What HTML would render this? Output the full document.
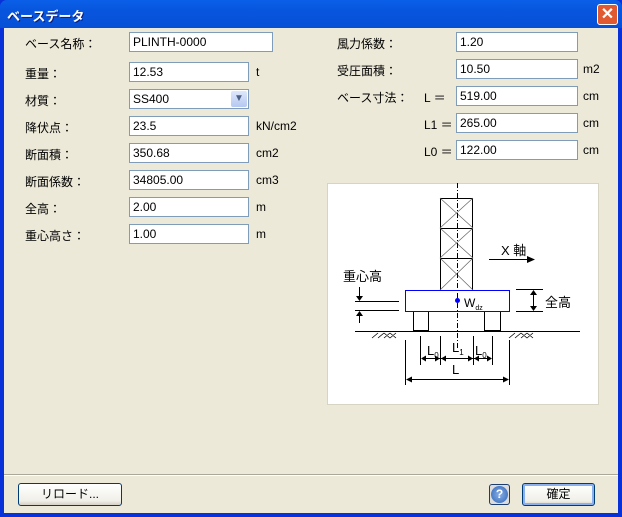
<!DOCTYPE html>
<html><head><meta charset="utf-8"><style>
*{margin:0;padding:0;box-sizing:border-box}
body{width:622px;height:517px;background:#0831d9;font-family:"Liberation Sans","Noto Sans CJK JP",sans-serif;font-size:12px;color:#000;position:relative;overflow:hidden}
.title{position:absolute;left:0;top:0;width:622px;height:28px;background:linear-gradient(#0a5fe8,#0855dd 40%,#0650d6);border-radius:7px 7px 0 0}
.title span{position:absolute;left:7px;top:6px;color:#fff;font-weight:bold;font-size:13px;text-shadow:1px 1px #0a1e80}
.close{position:absolute;left:597px;top:4px;width:21px;height:21px;background:#e0592f;border:1px solid #fff;border-radius:3px;color:#fff;font-size:16px;text-align:center;line-height:19px;font-weight:bold}
.client{position:absolute;left:4px;top:28px;width:614px;height:485px;background:#ece9d8}
.lbl{position:absolute;font-size:12px;white-space:nowrap}
.in{position:absolute;height:20px;background:#fff;border:1px solid #7f9db9;padding:2px 0 0 3px;font-size:12px}
.sep{position:absolute;left:4px;top:474px;width:614px;height:2px;border-top:1px solid #aca899;border-bottom:1px solid #fff}
.btn{position:absolute;height:23px;border:1px solid #003c74;border-radius:3px;background:linear-gradient(#fff,#f0efe8 80%,#d6d0c5);text-align:center;line-height:21px;font-size:12px}
</style></head><body>
<div class="title"><span>ベースデータ</span></div>
<div class="close">✕</div>
<div class="client"></div>

<div class="lbl" style="left:25px;top:35px">ベース名称：</div>
<div class="in" style="left:129px;top:32px;width:144px">PLINTH-0000</div>
<div class="lbl" style="left:25px;top:65px">重量：</div>
<div class="in" style="left:129px;top:62px;width:120px">12.53</div><div class="lbl" style="left:256px;top:65px">t</div>
<div class="lbl" style="left:25px;top:92px">材質：</div>
<div class="in" style="left:129px;top:89px;width:120px">SS400<div style="position:absolute;right:1px;top:1px;width:16px;height:16px;background:linear-gradient(#dfe8fb,#b5c8f2);border-radius:2px;color:#4d6185;font-size:10px;text-align:center;line-height:16px">▼</div></div>
<div class="lbl" style="left:25px;top:119px">降伏点：</div>
<div class="in" style="left:129px;top:116px;width:120px">23.5</div><div class="lbl" style="left:256px;top:119px">kN/cm2</div>
<div class="lbl" style="left:25px;top:146px">断面積：</div>
<div class="in" style="left:129px;top:143px;width:120px">350.68</div><div class="lbl" style="left:256px;top:146px">cm2</div>
<div class="lbl" style="left:25px;top:173px">断面係数：</div>
<div class="in" style="left:129px;top:170px;width:120px">34805.00</div><div class="lbl" style="left:256px;top:173px">cm3</div>
<div class="lbl" style="left:25px;top:200px">全高：</div>
<div class="in" style="left:129px;top:197px;width:120px">2.00</div><div class="lbl" style="left:256px;top:200px">m</div>
<div class="lbl" style="left:25px;top:227px">重心高さ：</div>
<div class="in" style="left:129px;top:224px;width:120px">1.00</div><div class="lbl" style="left:256px;top:227px">m</div>

<div class="lbl" style="left:337px;top:35px">風力係数：</div>
<div class="in" style="left:456px;top:32px;width:122px">1.20</div>
<div class="lbl" style="left:337px;top:62px">受圧面積：</div>
<div class="in" style="left:456px;top:59px;width:122px">10.50</div><div class="lbl" style="left:583px;top:62px">m2</div>
<div class="lbl" style="left:337px;top:89px">ベース寸法：</div>
<div class="lbl" style="left:424px;top:89px">L ＝</div>
<div class="in" style="left:456px;top:86px;width:122px">519.00</div><div class="lbl" style="left:583px;top:89px">cm</div>
<div class="lbl" style="left:424px;top:116px">L1 ＝</div>
<div class="in" style="left:456px;top:113px;width:122px">265.00</div><div class="lbl" style="left:583px;top:116px">cm</div>
<div class="lbl" style="left:424px;top:143px">L0 ＝</div>
<div class="in" style="left:456px;top:140px;width:122px">122.00</div><div class="lbl" style="left:583px;top:143px">cm</div>

<svg style="position:absolute;left:327px;top:183px" width="272" height="222" viewBox="0 0 272 222">
<rect x="0.5" y="0.5" width="271" height="221" fill="#fff" stroke="#d8d4c4"/>
<g stroke="#000" fill="none" stroke-width="1">
<rect x="113.5" y="15.5" width="32" height="92"/>
<line x1="113" y1="45.5" x2="146" y2="45.5"/><line x1="113" y1="75.5" x2="146" y2="75.5"/>
<path d="M113 15L146 45M146 15L113 45M113 45L146 75M146 45L113 75M113 75L146 107M146 75L113 107" stroke="#666" stroke-width=".7"/>
<line x1="130.5" y1="0" x2="130.5" y2="165" stroke-dasharray="5,2,1,2"/>
<rect x="86.5" y="128.5" width="15" height="19"/><rect x="157.5" y="128.5" width="16" height="19"/>
<line x1="28" y1="148.5" x2="253" y2="148.5"/>
<path d="M45 155l6-5M51 155l6-5M57 155l6-5M63 155l6-5M57 150l6 5M63 150l6 5M182 155l6-5M188 155l6-5M194 155l6-5M200 155l6-5M194 150l6 5M200 150l6 5" stroke-width=".8"/>
<line x1="28" y1="118.5" x2="72" y2="118.5"/><line x1="28" y1="127.5" x2="72" y2="127.5"/>
<line x1="32.5" y1="104" x2="32.5" y2="116"/><line x1="32.5" y1="130" x2="32.5" y2="140"/>
<line x1="189" y1="106.5" x2="216" y2="106.5"/><line x1="189" y1="128.5" x2="216" y2="128.5"/>
<line x1="206.5" y1="109" x2="206.5" y2="126"/>
<line x1="162" y1="76.5" x2="200" y2="76.5"/>
<line x1="93.5" y1="153" x2="93.5" y2="182"/><line x1="113.5" y1="153" x2="113.5" y2="182"/>
<line x1="146.5" y1="153" x2="146.5" y2="182"/><line x1="165.5" y1="153" x2="165.5" y2="182"/>
<line x1="78.5" y1="157" x2="78.5" y2="202"/><line x1="182.5" y1="157" x2="182.5" y2="202"/>
<line x1="95" y1="175.5" x2="164" y2="175.5"/><line x1="80" y1="196.5" x2="181" y2="196.5"/>
</g>
<g fill="#000">
<path d="M29 113l3.5 5 3.5-5zM29 133l3.5-5 3.5 5zM203 112l3.5-5 3.5 5zM203 123l3.5 5 3.5-5zM200 73l8 3.5-8 3.5z"/>
<path d="M94 175.5l5-3v6zM113 175.5l-5-3v6zM114 175.5l5-3v6zM146 175.5l-5-3v6zM147 175.5l5-3v6zM165 175.5l-5-3v6zM79 196.5l6-3v6zM182 196.5l-6-3v6z"/>
</g>
<rect x="78.5" y="107.5" width="104" height="21" fill="none" stroke="#00f"/>
<circle cx="130.5" cy="117.5" r="2.5" fill="#00f"/>
<g font-size="13" font-family="Liberation Sans,Noto Sans CJK JP,sans-serif">
<text x="174" y="72">X 軸</text>
<text x="16" y="98">重心高</text>
<text x="218" y="124">全高</text>
<text x="137" y="124" font-size="12">W<tspan font-size="7" dy="3">dz</tspan></text>
<text x="100" y="172">L<tspan font-size="8" dy="3">0</tspan></text>
<text x="125" y="169">L<tspan font-size="8" dy="3">1</tspan></text>
<text x="148" y="172">L<tspan font-size="8" dy="3">0</tspan></text>
<text x="125" y="191">L</text>
</g>
</svg>

<div class="sep"></div>
<div class="btn" style="left:18px;top:483px;width:104px">リロード...</div>
<div style="position:absolute;left:489px;top:484px;width:21px;height:21px;border:1px solid #1c3d6e;border-radius:3px;background:#ddd"><div style="margin:1px;width:17px;height:17px;border-radius:50%;background:radial-gradient(#8ab0e6,#2e64b8);color:#fff;font-weight:bold;text-align:center;line-height:17px;font-size:12px">?</div></div>
<div class="btn" style="left:522px;top:483px;width:73px;border-color:#003c74;box-shadow:inset 0 0 0 2px #8ab0f0">確定</div>
</body></html>
